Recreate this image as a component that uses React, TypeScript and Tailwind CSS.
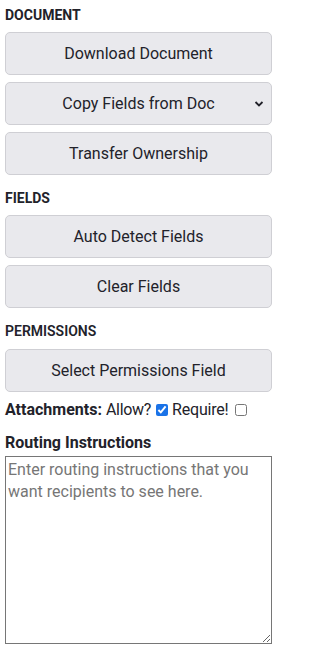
import React from "react";

const btn =
  "mt-[7px] h-[43px] w-full rounded-[5px] border border-[#cfcfd4] bg-[#e9e9ed] text-[16px] text-[#22222a] flex items-center justify-center";

function Heading({ children, className = "" }: { children: React.ReactNode; className?: string }) {
  return (
    <div className={"h-[20px] leading-[20px] text-[14px] font-bold text-[#22222a] " + className}>
      {children}
    </div>
  );
}

export default function App() {
  return (
    <div
      className="w-[280px] h-[656px] bg-white pl-[5px] pr-[8px] pt-[5px]"
      style={{ fontFamily: "Roboto, 'Liberation Sans', sans-serif" }}
    >
      <Heading>DOCUMENT</Heading>
      <button className={btn}>Download Document</button>
      <div className={btn + " relative"}>
        <span>Copy Fields from Doc</span>
        <svg
          className="absolute right-[7px] top-1/2 -translate-y-1/2"
          width="10"
          height="7"
          viewBox="0 0 10 7"
        >
          <path d="M1.5 1.5 L5 5 L8.5 1.5" fill="none" stroke="#22222a" strokeWidth="1.8" />
        </svg>
      </div>
      <button className={btn}>Transfer Ownership</button>

      <Heading className="mt-[13px]">FIELDS</Heading>
      <button className={btn}>Auto Detect Fields</button>
      <button className={btn}>Clear Fields</button>

      <Heading className="mt-[13px] font-semibold">PERMISSIONS</Heading>
      <button className={btn + " mt-[8px]"}>Select Permissions Field</button>

      <div className="mt-[6px] h-[24px] flex items-center text-[16px] text-[#22222a]">
        <span className="font-bold">Attachments:</span>
        <span className="ml-[4px] tracking-[-0.3px]">Allow?</span>
        <input type="checkbox" defaultChecked className="ml-[5px] w-[12px] h-[12px] accent-[#1a73e8]" />
        <span className="ml-[4px] tracking-[-0.2px]">Require!</span>
        <input type="checkbox" className="ml-[6px] w-[12px] h-[12px]" />
      </div>

      <div className="mt-[9px] h-[24px] leading-[24px] text-[16px] font-bold text-[#22222a]">
        Routing Instructions
      </div>
      <textarea
        className="mt-[1px] block w-[267px] h-[188px] border border-[#767676] px-[2px] py-[2px] text-[16px] leading-[22px] text-[#22222a] placeholder:text-[#767676] outline-none"
        placeholder="Enter routing instructions that you want recipients to see here."
      />
    </div>
  );
}
